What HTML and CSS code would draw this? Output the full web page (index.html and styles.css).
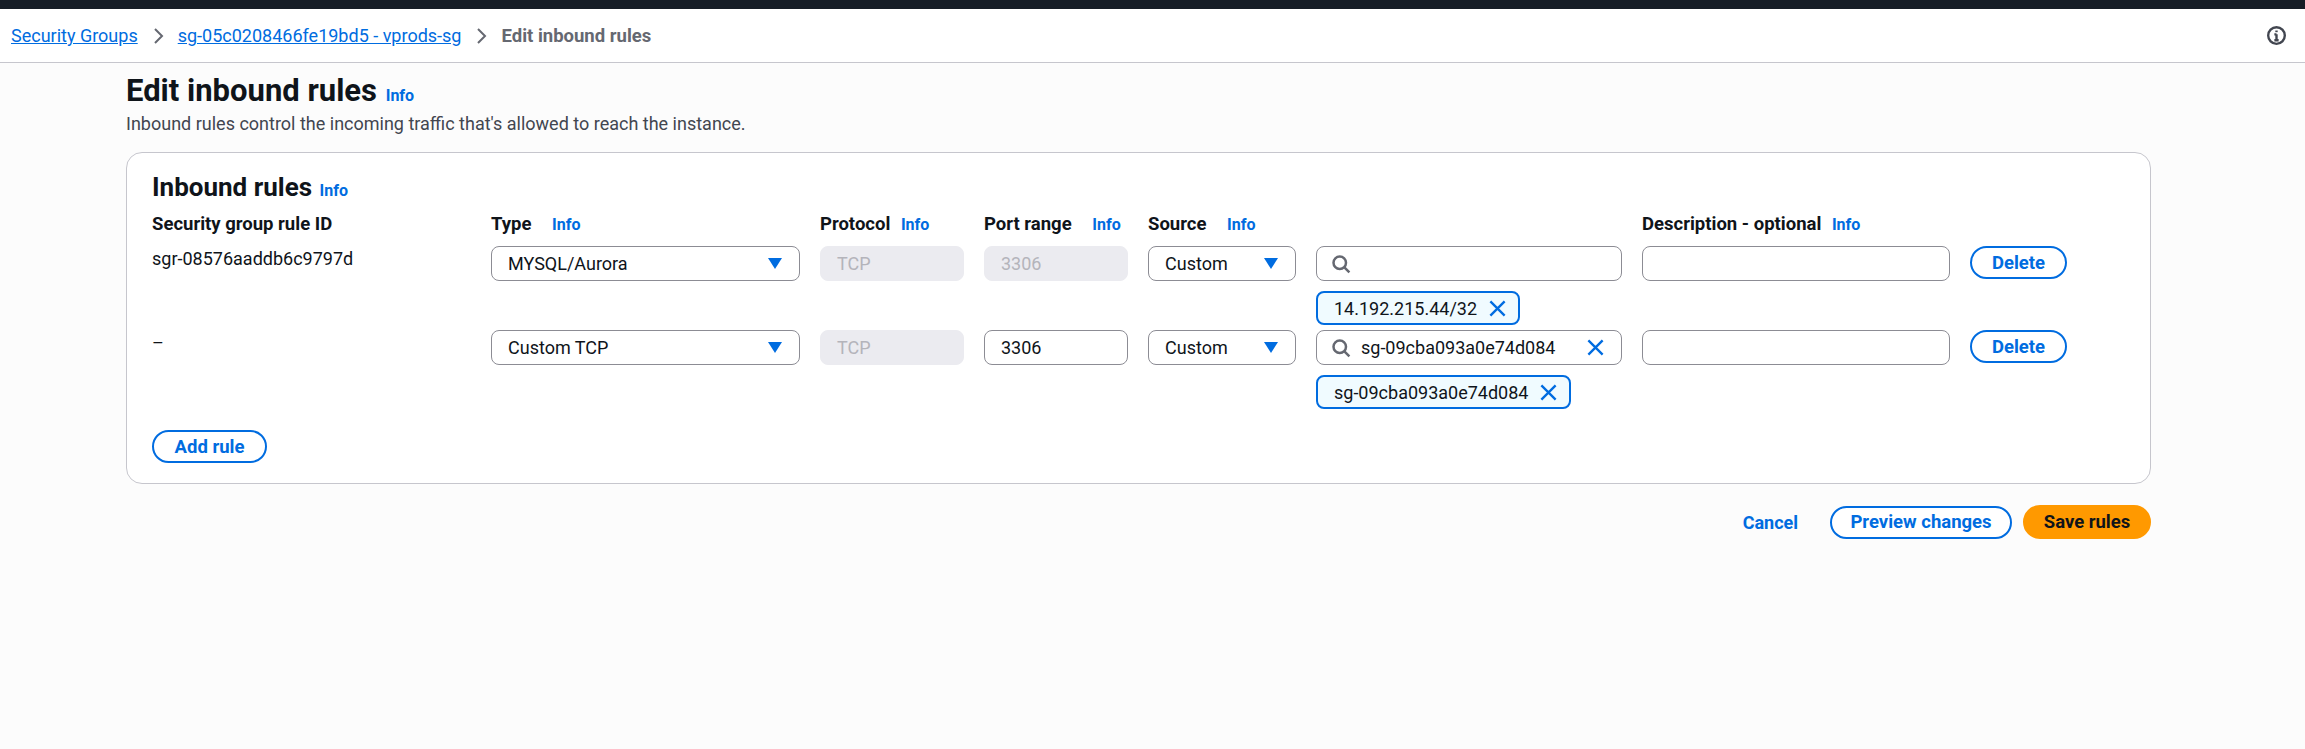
FILE: index.html
```html
<!DOCTYPE html>
<html>

<head>
    <title>Edit inbound rules</title>
    <link rel="stylesheet" href="styles.css">
</head>

<body>
    <div class="top-bar"></div>

    <nav class="breadcrumbs">
        <a href="#">Security Groups</a>
        <svg class="crumb-arrow" viewBox="0 0 16 16"><path d="M5 1 12 8 5 15"/></svg>
        <a href="#">sg-05c0208466fe19bd5 - vprods-sg</a>
        <svg class="crumb-arrow" viewBox="0 0 16 16"><path d="M5 1 12 8 5 15"/></svg>
        <span class="crumb-current">Edit inbound rules</span>
        <svg class="help-icon" viewBox="0 0 16 16"><circle cx="8" cy="8" r="7"/><path d="M8 7v5M6.2 7H8M6.2 12h3.6"/><path d="M8 3.8v1.4"/></svg>
    </nav>

    <main class="content">
        <h1 class="page-title">Edit inbound rules <span class="info">Info</span></h1>
        <p class="page-desc">Inbound rules control the incoming traffic that's allowed to reach the instance.</p>

        <section class="card">
            <h2 class="card-title">Inbound rules <span class="info">Info</span></h2>

            <div class="rules-grid">
                <div class="col-head">Security group rule ID</div>
                <div class="col-head">Type <span class="info gap">Info</span></div>
                <div class="col-head">Protocol <span class="info">Info</span></div>
                <div class="col-head">Port range <span class="info gap">Info</span></div>
                <div class="col-head">Source <span class="info gap">Info</span></div>
                <div class="col-head"></div>
                <div class="col-head">Description - optional <span class="info">Info</span></div>
                <div class="col-head"></div>

                <div class="rule-id">sgr-08576aaddb6c9797d</div>
                <div class="field select">MYSQL/Aurora<i class="caret"></i></div>
                <div class="field disabled">TCP</div>
                <div class="field disabled">3306</div>
                <div class="field select">Custom<i class="caret"></i></div>
                <div class="source-cell">
                    <div class="field search">
                        <svg class="search-icon" viewBox="0 0 16 16"><circle cx="7" cy="7" r="5"/><path d="m10.7 10.7 4 4"/></svg>
                    </div>
                    <div class="token">14.192.215.44/32<svg class="x-icon" viewBox="0 0 16 16"><path d="m2 2 12 12M14 2 2 14"/></svg></div>
                </div>
                <div class="field"></div>
                <div><button class="btn" type="button">Delete</button></div>

                <div class="rule-id">–</div>
                <div class="field select">Custom TCP<i class="caret"></i></div>
                <div class="field disabled">TCP</div>
                <div class="field">3306</div>
                <div class="field select">Custom<i class="caret"></i></div>
                <div class="source-cell">
                    <div class="field search">
                        <svg class="search-icon" viewBox="0 0 16 16"><circle cx="7" cy="7" r="5"/><path d="m10.7 10.7 4 4"/></svg>
                        <span class="search-text">sg-09cba093a0e74d084</span>
                        <svg class="x-icon" viewBox="0 0 16 16"><path d="m2 2 12 12M14 2 2 14"/></svg>
                    </div>
                    <div class="token">sg-09cba093a0e74d084<svg class="x-icon" viewBox="0 0 16 16"><path d="m2 2 12 12M14 2 2 14"/></svg></div>
                </div>
                <div class="field"></div>
                <div><button class="btn" type="button">Delete</button></div>
            </div>

            <button class="btn add-rule" type="button">Add rule</button>
        </section>

        <div class="actions">
            <a class="cancel" href="#">Cancel</a>
            <button class="btn preview" type="button">Preview changes</button>
            <button class="btn save" type="button">Save rules</button>
        </div>
    </main>
</body>

</html>
```

FILE: styles.css
```css
body {
    font-family: Roboto, Arial, sans-serif;
    font-size: 18px;
    color: #0f141a;
    background-color: #fcfcfc;
    margin: 0;
    padding: 0;
}

.top-bar {
    height: 9px;
    background-color: #161d26;
}

.breadcrumbs {
    display: flex;
    align-items: center;
    height: 53px;
    padding: 0 19px 0 11px;
    background-color: #ffffff;
    border-bottom: 1px solid #c6c6cd;
    box-sizing: content-box;
}

.breadcrumbs a {
    color: #006ce0;
}

.crumb-arrow {
    width: 16px;
    height: 16px;
    margin: 0 12px;
    fill: none;
    stroke: #656871;
    stroke-width: 2;
}

.crumb-current {
    font-size: 18.5px;
    font-weight: 700;
    color: #656871;
}

.help-icon {
    width: 19px;
    height: 19px;
    margin-left: auto;
    fill: none;
    stroke: #424650;
    stroke-width: 2;
}

.content {
    width: 2025px;
    margin-left: 126px;
}

.page-title {
    font-size: 31px;
    line-height: 36px;
    font-weight: 700;
    margin: 0;
    padding-top: 10px;
}

.info {
    font-size: 16px;
    font-weight: 700;
    color: #006ce0;
    margin-left: 6px;
}

.info.gap {
    margin-left: 16px;
}

.page-title .info,
.card-title .info {
    margin-left: 1px;
}

.page-desc {
    color: #424650;
    line-height: 20px;
    margin: 0 0 18px;
}

.card {
    box-sizing: border-box;
    height: 332px;
    padding: 20px 25px;
    background-color: #ffffff;
    border: 1px solid #c6c6cd;
    border-radius: 16px;
}

.card-title {
    font-size: 26px;
    line-height: 28px;
    font-weight: 700;
    margin: 0;
}

.rules-grid {
    display: grid;
    grid-template-columns: 319px 309px 144px 144px 148px 306px 308px 97px;
    column-gap: 20px;
    margin-top: 9px;
}

.col-head {
    font-size: 18.5px;
    font-weight: 700;
    line-height: 20px;
    height: 32px;
}

.rule-id {
    line-height: 20px;
    padding-top: 3px;
}

.field {
    box-sizing: border-box;
    display: flex;
    align-items: center;
    height: 35px;
    padding: 0 16px;
    background-color: #ffffff;
    border: 1px solid #8c8c94;
    border-radius: 8px;
}

.field.disabled {
    background-color: #ebebf0;
    border-color: #ebebf0;
    color: #b4b4bb;
}

.select {
    justify-content: space-between;
}

.caret {
    width: 0;
    height: 0;
    border-left: 7px solid transparent;
    border-right: 7px solid transparent;
    border-top: 11px solid #006ce0;
    margin-right: 1px;
}

.source-cell {
    height: 84px;
}

.search-icon {
    width: 20px;
    height: 20px;
    flex: none;
    fill: none;
    stroke: #656871;
    stroke-width: 2;
}

.search {
    padding: 0 16px 0 14px;
}

.search-text {
    margin-left: 10px;
}

.x-icon {
    width: 19px;
    height: 19px;
    flex: none;
    margin-left: auto;
    fill: none;
    stroke: #006ce0;
    stroke-width: 2;
}

.token {
    box-sizing: border-box;
    display: inline-flex;
    align-items: center;
    gap: 11px;
    height: 34px;
    margin-top: 10px;
    padding: 0 11px 0 16px;
    background-color: #f0fbff;
    border: 2px solid #006ce0;
    border-radius: 8px;
}

.btn {
    box-sizing: border-box;
    height: 33px;
    padding: 0 20px;
    font-family: inherit;
    font-size: 18.5px;
    font-weight: 700;
    color: #006ce0;
    background-color: #ffffff;
    border: 2px solid #006ce0;
    border-radius: 20px;
    cursor: pointer;
}

.add-rule {
    display: block;
    width: 115px;
    padding: 0;
    margin-top: 16px;
}

.rules-grid .btn {
    width: 97px;
    padding: 0;
}

.actions {
    display: flex;
    justify-content: flex-end;
    align-items: center;
    margin-top: 21px;
}

.cancel {
    font-weight: 700;
    color: #006ce0;
    text-decoration: none;
    margin-right: 32px;
}

.preview {
    width: 182px;
    padding: 0;
    margin-right: 11px;
}

.save {
    width: 128px;
    height: 34px;
    padding: 0;
    color: #0f141a;
    background-color: #ff9900;
    border-color: #ff9900;
}
```
